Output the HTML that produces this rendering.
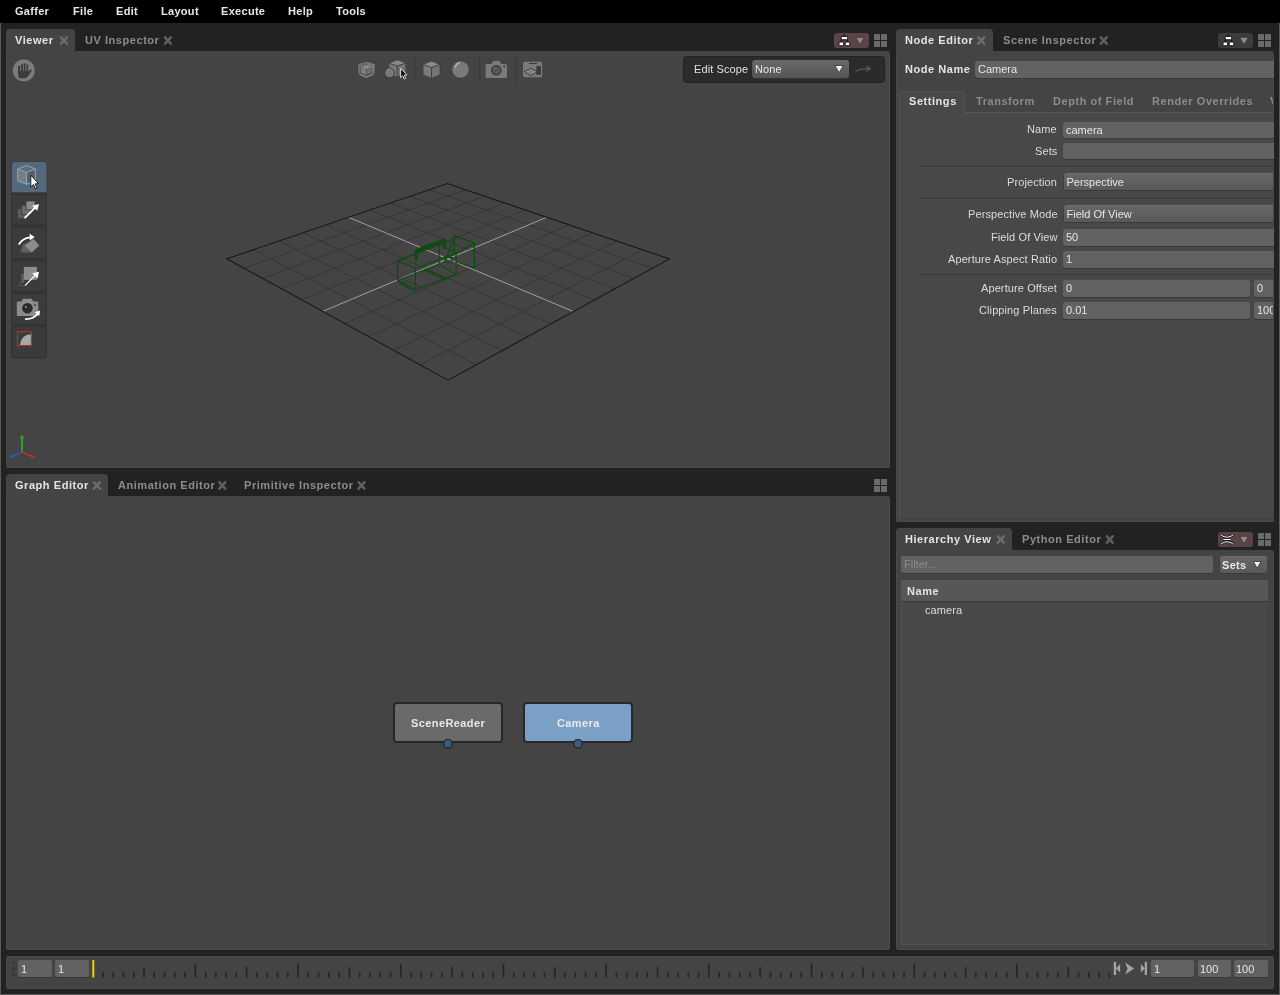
<!DOCTYPE html>
<html><head><meta charset="utf-8">
<style>
*{box-sizing:border-box;margin:0;padding:0}
html,body{width:1280px;height:995px;overflow:hidden;background:#222;font-family:"Liberation Sans",sans-serif;font-size:11px;color:#ddd}
.a{position:absolute}
.menu span,.tt,.lbl,.fld,.dd{will-change:transform}
.menu{left:0;top:0;width:1280px;height:23px;background:#000}
.menu span{position:absolute;top:5px;font-weight:bold;color:#e6e6e6;font-size:11px;letter-spacing:0.3px}
.tab{position:absolute;height:23px;background:#444;border-radius:4px 4px 0 0}
.tt{position:absolute;font-weight:bold;font-size:11px;letter-spacing:0.55px;white-space:nowrap}
.tt.on{color:#e4e4e4}
.tt.off{color:#8c8c8c}
.x{position:absolute;width:9px;height:9px}
.panel{position:absolute;background:#444;border-radius:0 3px 2px 2px;border:1px solid #4a4a4a;border-top:none}
.grid{position:absolute;width:13.6px;height:13.6px}
.grid i{position:absolute;width:6.3px;height:6.3px;background:#6a6a6a}
.lbl{position:absolute;color:#dcdcdc;white-space:nowrap;text-align:right;letter-spacing:0.1px}
.fld{position:absolute;background:#626262;border-radius:2px;box-shadow:0 1px 0 #383838;color:#e6e6e6;padding-left:3px;white-space:nowrap;overflow:hidden}
.dd{position:absolute;background:linear-gradient(#676767,#585858);border-radius:3px;color:#e6e6e6;padding-left:3px;white-space:nowrap;overflow:hidden;box-shadow:inset 1px 0 0 #3e3e3e,inset 0 -1px 0 #3a3a3a,inset 0 1px 0 #6c6c6c}
.sep{position:absolute;height:1px;background:#3a3a3a}
</style></head><body>
<!-- borders -->
<div class="a" style="left:0;top:23px;width:1px;height:972px;background:#5a5a5a"></div>
<div class="a" style="left:1279px;top:23px;width:1px;height:972px;background:#5a5a5a"></div>
<div class="a" style="left:0;top:994px;width:1280px;height:1px;background:#5a5a5a"></div>

<!-- menubar -->
<div class="a menu">
<span style="left:15px">Gaffer</span>
<span style="left:73px">File</span>
<span style="left:116px">Edit</span>
<span style="left:161px">Layout</span>
<span style="left:221px">Execute</span>
<span style="left:288px">Help</span>
<span style="left:336px">Tools</span>
</div>

<!-- ============ VIEWER ============ -->
<div class="tab" style="left:6px;top:29px;width:69px"></div>
<div class="tt on" style="left:15px;top:34px">Viewer</div>
<div class="tt off" style="left:85px;top:34px">UV Inspector</div>
<div class="panel" style="left:6px;top:51px;width:884px;height:417px"></div>
<svg class="a" style="left:0;top:0" width="890" height="470" viewBox="0 0 890 470">
<!-- hand -->
<circle cx="23.8" cy="70.4" r="11.4" fill="#7c7c7c" stroke="#3a3a3a" stroke-width="0.6"/>
<g stroke="#3c3c3c" stroke-linecap="round" fill="none"><path d="M19.1,66.5 L19.1,73" stroke-width="2"/><path d="M22,65 L22,72" stroke-width="1.9"/><path d="M24.7,64.1 L24.7,72" stroke-width="1.8"/><path d="M27.4,65 L27.4,72" stroke-width="1.7"/><path d="M28,74.5 L30.8,70.3" stroke-width="1.9"/></g>
<path d="M18.1,71 L28.6,71 L29.5,73.5 L27.3,77 Q26.2,78.2 24.5,78.2 L20.5,78.2 Q18.3,78.2 18.2,76 Z" fill="#3c3c3c"/>
<!-- top toolbar icons -->
<g fill="#7a7a7a">
 <!-- shield cube -->
 <path d="M366.3,60.7 L375.7,63.5 L375,74.3 L366.3,79 L357.9,74.75 L357.2,63.5 Z" fill="#3c3c3c"/>
 <path d="M366.3,61.5 L366.3,66 L360.5,68 L360.5,73.5 L358.3,74.3 L357.9,64 Z" fill="#6c6c6c"/>
 <path d="M366.6,61.5 L366.6,66 L372,68 L372,73.3 L374.6,74 L375,64 Z" fill="#767676"/>
 <path d="M358.7,74.8 L360.8,73.6 L366.3,76 L371.8,73.4 L374.2,74.6 L366.3,78.3 Z" fill="#7e7e7e"/>
 <path d="M366.3,65.3 L371.6,67.3 L366.3,69.5 L361,67.3 Z" fill="#8a8a8a"/>
 <path d="M361,67.6 L366,69.8 L366,75 L361,72.8 Z" fill="#808080"/>
 <path d="M371.6,67.6 L366.6,69.8 L366.6,75 L371.6,72.6 Z" fill="#707070"/>
 <!-- cube + sphere -->
 <path d="M397.2,60.2 L405.4,63.3 L397.2,65.9 L389.3,63.4 Z" fill="#8a8a8a"/>
 <path d="M389.3,63.7 L396.9,66.1 L396.9,76.6 L389.3,73.5 Z" fill="#7a7a7a"/>
 <path d="M405.4,63.6 L397.5,66.1 L397.5,76.6 L405.4,73.3 Z" fill="#747474"/>
 <path d="M389.3,63.4 L397.2,65.9 L405.4,63.3 M397.2,65.9 L397.2,76.6" stroke="#3e3e3e" stroke-width="0.8" fill="none"/>
 <circle cx="389.5" cy="72.9" r="4.8" fill="#7a7a7a" stroke="#3a3a3a" stroke-width="0.9"/>
 <path d="M386.6,71.2 Q387.4,69.2 389.5,68.9" stroke="#a0a0a0" stroke-width="0.7" fill="none"/>
 <!-- cube -->
 <path d="M431.5,61 L440,64.3 L431.5,67.6 L423,64.3 Z" fill="#8a8a8a"/>
 <path d="M423,64.3 L431.5,67.6 L431.5,78.4 L423,75 Z" fill="#7a7a7a"/>
 <path d="M440,64.3 L431.5,67.6 L431.5,78.4 L440,75 Z" fill="#747474"/>
 <path d="M431.5,61 L440,64.3 L440,75 L431.5,78.4 L423,75 L423,64.3 Z M423,64.3 L431.5,67.6 L440,64.3 M431.5,67.6 L431.5,78.4" fill="none" stroke="#3a3a3a" stroke-width="0.8"/>
 <!-- sphere -->
 <circle cx="460.5" cy="69.5" r="8.6" fill="#7a7a7a" stroke="#3c3c3c" stroke-width="0.6"/>
 <path d="M455.3,67 Q456.3,63.6 459.5,62.5" stroke="#c0c0c0" stroke-width="1.1" fill="none" stroke-linecap="round"/>
 <!-- camera -->
 <path d="M491.5,64 L493.2,61 L499.5,61 L501.2,64 L505.5,64 Q507,64 507,65.5 L507,76.6 Q507,78.1 505.5,78.1 L487.1,78.1 Q485.6,78.1 485.6,76.6 L485.6,65.5 Q485.6,64 487.1,64 Z" fill="#7a7a7a"/>
 <circle cx="496.3" cy="70.3" r="5.3" fill="#363636"/>
 <circle cx="496.3" cy="70.3" r="4.1" fill="#555"/>
 <circle cx="494.6" cy="68.6" r="0.7" fill="#9a9a9a"/>
 <rect x="503.4" y="65.5" width="1.8" height="1.8" fill="#3a3a3a"/>
 <!-- frame -->
 <rect x="523" y="61.8" width="19.2" height="15.4" rx="1.8" fill="#7a7a7a"/>
 <rect x="529" y="63" width="7.9" height="1" fill="#3a3a3a"/>
 <path d="M524.2,71.6 L531,68.4 L537.6,71.6 L531,75.5 Z" fill="#8c8c8c" stroke="#3a3a3a" stroke-width="0.9"/>
 <path d="M527.6,70 L534.3,73.5 M534.3,70 L527.6,73.5" stroke="#6a6a6a" stroke-width="0.5"/>
 <rect x="536.3" y="66.1" width="4.6" height="8.8" fill="#3c3c3c"/>
</g>
<g stroke="#393939" stroke-width="1"><line x1="414.8" y1="56" x2="414.8" y2="83"/><line x1="479.7" y1="56" x2="479.7" y2="83"/><line x1="515.6" y1="56" x2="515.6" y2="83"/></g>
<!-- cursor on top toolbar -->
<path d="M400.6,68.3 L400.6,77.6 L402.7,75.8 L404.3,79 L405.7,78.3 L404.2,75.1 L407,74.9 Z" fill="#111" stroke="#e8e8e8" stroke-width="0.9"/>
<!-- edit scope -->
<rect x="683.5" y="56.5" width="201" height="26" rx="3" fill="#2b2b2b" stroke="#222" stroke-width="1"/>
<rect x="752.2" y="59.9" width="96.8" height="18.4" rx="3" fill="url(#ddg)"/>
<defs><linearGradient id="ddg" x1="0" y1="0" x2="0" y2="1"><stop offset="0" stop-color="#6a6a6a"/><stop offset="1" stop-color="#555"/></linearGradient>
<linearGradient id="ddg2" x1="0" y1="0" x2="0" y2="1"><stop offset="0" stop-color="#666"/><stop offset="1" stop-color="#575757"/></linearGradient></defs>
<path d="M834.9,65.5 L843.3,65.5 L839.1,72.8 Z" fill="#f0f0f0" stroke="#2e2e2e" stroke-width="0.8"/>
<path d="M855.5,71.6 Q859.5,68.6 867,68.6" stroke="#555" stroke-width="1.3" fill="none"/><path d="M871.1,68.5 L866.1,64.8 L867.4,68.5 L865.5,72.6 Z" fill="#585858"/>
<!-- left toolbar -->
<rect x="11" y="161.5" width="35.5" height="197" rx="4" fill="#383838"/>
<path d="M11.9,192.3 L11.9,165 Q11.9,162 14.9,162 L43.4,162 Q46.4,162 46.4,165 L46.4,192.3 Z" fill="#56697c"/>
<rect x="11.9" y="194.3" width="34.5" height="31" fill="#3b3b3b" stroke="#313131" stroke-width="0.9"/>
<rect x="11.9" y="227.2" width="34.5" height="31.3" fill="#3b3b3b" stroke="#313131" stroke-width="0.9"/>
<rect x="11.9" y="260.2" width="34.5" height="31.3" fill="#3b3b3b" stroke="#313131" stroke-width="0.9"/>
<rect x="11.9" y="293.2" width="34.5" height="31.3" fill="#3b3b3b" stroke="#313131" stroke-width="0.9"/>
<rect x="11.9" y="326.3" width="34.5" height="31.5" rx="3" fill="#3b3b3b" stroke="#313131" stroke-width="0.9"/>
<!-- 1 select cube -->
<path d="M26.5,165.5 L35.3,169 L26.5,172.5 L17.7,169 Z" fill="#6a6a6a"/>
<path d="M17.7,169 L26.5,172.5 L26.5,184.3 L17.7,180.8 Z" fill="#7c7c7c"/>
<path d="M35.3,169 L26.5,172.5 L26.5,184.3 L35.3,180.8 Z" fill="#5e5e5e"/>
<path d="M26.5,165.5 L35.3,169 L35.3,180.8 L26.5,184.3 L17.7,180.8 L17.7,169 Z M17.7,169 L26.5,172.5 L35.3,169 M26.5,172.5 L26.5,184.3" fill="none" stroke="#7ab2e6" stroke-width="0.9"/>
<path d="M30.8,175.2 L30.8,187 L33.4,184.6 L35.4,188.6 L37,187.8 L35,183.9 L38.5,183.6 Z" fill="#fff" stroke="#111" stroke-width="0.9"/>
<!-- 2 translate -->
<rect x="17.9" y="209" width="9.2" height="9.2" fill="#5c5c5c"/>
<rect x="21.7" y="205.2" width="9.2" height="9.2" fill="#6e6e6e" stroke="#3b3b3b" stroke-width="0.8"/>
<rect x="26" y="201" width="9.1" height="8.8" fill="#8c8c8c" stroke="#3b3b3b" stroke-width="0.8"/>
<path d="M24.5,218.2 L36,206.8" stroke="#fff" stroke-width="1.9"/>
<path d="M39,204 L32.2,205.8 L37.2,210.8 Z" fill="#fff"/>
<!-- 3 rotate -->
<path d="M19.5,252.5 L28,252.5 L24,243 Z" fill="#555"/>
<path d="M22,252.5 L30,252.5 L28,242 L22,246 Z" fill="#606060"/>
<path d="M33.4,238.7 L39.3,245.4 L31.6,252.8 L24.9,245.4 Z" fill="#8c8c8c"/>
<path d="M18.8,244.5 Q23,237.5 31,237.3" stroke="#fff" stroke-width="1.8" fill="none"/>
<path d="M34.6,237 L29.6,233.8 L29.8,240.6 Z" fill="#fff"/>
<!-- 4 scale -->
<path d="M19,281.5 L19,286 L24,286 L24,285 L20,285 L20,281.5 Z" fill="#555"/>
<rect x="21.3" y="274" width="2.5" height="9" fill="#606060"/>
<rect x="23.8" y="266.9" width="13.1" height="13" fill="#8c8c8c"/>
<path d="M24.9,285.6 L35.5,275" stroke="#fff" stroke-width="1.2"/>
<path d="M39,271.8 L32.2,273.2 L37.6,278.6 Z" fill="#fff"/>
<!-- 5 camera -->
<path d="M21.5,301.5 L23,298.8 L31.7,298.8 L33.2,301.5 L37,301.5 Q38.3,301.5 38.3,302.8 L38.3,314.7 Q38.3,316 37,316 L18.1,316 Q16.8,316 16.8,314.7 L16.8,302.8 Q16.8,301.5 18.1,301.5 Z" fill="#8c8c8c"/>
<circle cx="27.4" cy="308.3" r="5.3" fill="#2b2b2b"/>
<circle cx="25.9" cy="306.9" r="0.9" fill="#aaa"/>
<circle cx="35" cy="305" r="0.9" fill="#3a3a3a"/>
<path d="M25,319 Q33,319.5 38,313.5" stroke="#fff" stroke-width="1.7" fill="none"/>
<path d="M40.2,310.6 L34.8,312.2 L39.2,316 Z" fill="#fff"/>
<!-- 6 crop -->
<rect x="17.5" y="331.7" width="14" height="14" fill="#3b3b3b" stroke="#d02828" stroke-width="1"/>
<path d="M30.9,344.9 L20.2,344.9 A10.7,10.7 0 0 1 30.9,334.2 Z" fill="#a8a8a8"/>
<!-- axis -->
<path d="M22,452 L22,435.2" stroke="#2e9e2e" stroke-width="2"/>
<path d="M22,452 L11,457" stroke="#2c5ac8" stroke-width="1.5"/>
<path d="M22,452 L33,457" stroke="#c82c2c" stroke-width="1.5"/>
<path d="M8,458 L12.5,454.5 L13,457.5 Z" fill="#2c5ac8"/>
<path d="M36,458 L31.5,454.5 L31,457.5 Z" fill="#c82c2c"/>
<rect x="20" y="437" width="4" height="2" rx="0.8" fill="#2e9e2e"/>
<g stroke="#363636" stroke-width="1"><line x1="253.4" y1="249.7" x2="476.1" y2="364.8"/><line x1="244.1" y1="268.3" x2="465.8" y2="189.8"/><line x1="278.8" y1="241.1" x2="502.5" y2="350.4"/><line x1="262.3" y1="278.3" x2="484.8" y2="196.3"/><line x1="303.1" y1="232.8" x2="527.4" y2="336.7"/><line x1="281.4" y1="288.8" x2="504.6" y2="203.0"/><line x1="326.3" y1="224.9" x2="551.0" y2="323.8"/><line x1="301.5" y1="299.8" x2="525.2" y2="210.0"/><line x1="370.0" y1="210.0" x2="594.5" y2="299.9"/><line x1="345.0" y1="323.6" x2="569.1" y2="224.9"/><line x1="390.6" y1="203.0" x2="614.7" y2="288.9"/><line x1="368.6" y1="336.6" x2="592.5" y2="232.8"/><line x1="410.3" y1="196.3" x2="633.8" y2="278.4"/><line x1="393.6" y1="350.3" x2="617.0" y2="241.1"/><line x1="429.2" y1="189.8" x2="652.0" y2="268.4"/><line x1="420.0" y1="364.8" x2="642.6" y2="249.8"/></g><g stroke="#a0a0a0" stroke-width="1"><line x1="348.6" y1="217.3" x2="573.4" y2="311.5"/><line x1="322.7" y1="311.4" x2="546.7" y2="217.3"/></g><polygon fill="none" stroke="#181818" stroke-width="1.1" points="226.8,258.8 447.5,183.6 669.4,258.9 448.1,380.2"/>
<!-- camera wireframe -->
<g stroke="#0a4d0c" stroke-width="1.15" fill="none">
 <path d="M397.6,260.6 L397.6,280.3 L415.3,289.4 L415.3,268.3 Z"/>
 <path d="M397.6,260.6 L439.2,244.8 L456.1,253.3 L415.3,268.3"/>
 <path d="M439.2,244.8 L439.2,264.5 L456.1,274.4 L456.1,253.3"/>
 <path d="M397.6,280.3 L439.2,264.5 M415.3,289.4 L456.1,274.4"/>
 <path d="M398.5,282.5 L414.5,291" />
 <path d="M454.3,235.6 L474.4,243 L474.4,268 L456.8,262 M474.4,243 L456.1,253.3 M454.3,235.6 L454.3,253.2 M454.3,235.6 L445.6,261"/>
 <path d="M424.5,269.4 L444.9,279.2" stroke-width="2"/>
 <path d="M415.4,251.3 L445.6,239.8" stroke-width="3.6"/>
 <path d="M416.2,250.4 L416.2,260.6" stroke-width="3"/>
 <path d="M444.6,239 L444.6,248.5" stroke-width="3"/>
 <path d="M445,257.5 L452,257.5 L452,262 L445,262 Z" />
</g>
</svg>
<!-- editor layout buttons viewer -->
<div class="a" style="left:834px;top:33px;width:35px;height:15px;background:#5c4347;border-radius:3px"></div>
<svg class="a" style="left:834px;top:33px" width="35" height="15"><path d="M10,1 L10,4 M7.2,6.8 L7.2,12.8 M13.5,6.8 L13.5,12.8" stroke="#111" stroke-width="0.9"/><g fill="#fff" stroke="#111" stroke-width="1"><rect x="7.2" y="3.4" width="6.5" height="3.4" rx="0.8"/><rect x="5" y="9" width="4.7" height="3.8" rx="0.8"/><rect x="11.2" y="9" width="4.6" height="3.8" rx="0.8"/></g><path d="M21.8,4.4 L30.3,4.4 L26,11.5 Z" fill="#8c8c8c" stroke="#333" stroke-width="0.6"/></svg>
<div class="grid" style="left:873.7px;top:33.6px"><i style="left:0;top:0"></i><i style="left:7.3px;top:0"></i><i style="left:0;top:7.3px"></i><i style="left:7.3px;top:7.3px"></i></div>
<div class="lbl" style="left:694px;top:63px;color:#e0e0e0">Edit Scope</div>
<div class="lbl" style="left:755px;top:63px;color:#e8e8e8">None</div>


<!-- ============ GRAPH EDITOR ============ -->
<div class="tab" style="left:6px;top:474px;width:102px"></div>
<div class="tt on" style="left:15px;top:479px">Graph Editor</div>
<div class="tt off" style="left:118px;top:479px">Animation Editor</div>
<div class="tt off" style="left:244px;top:479px">Primitive Inspector</div>
<div class="panel" style="left:6px;top:496px;width:884px;height:454px"></div>

<!-- ============ NODE EDITOR ============ -->
<div class="tab" style="left:896px;top:29px;width:97px"></div>
<div class="tt on" style="left:905px;top:34px">Node Editor</div>
<div class="tt off" style="left:1003px;top:34px">Scene Inspector</div>
<div class="panel" style="left:896px;top:51px;width:378px;height:471px"></div>

<!-- ============ HIERARCHY ============ -->
<div class="tab" style="left:896px;top:528px;width:116px"></div>
<div class="tt on" style="left:905px;top:533px">Hierarchy View</div>
<div class="tt off" style="left:1022px;top:533px">Python Editor</div>
<div class="panel" style="left:896px;top:550px;width:378px;height:400px"></div>

<!-- ============ TIMELINE ============ -->
<div class="panel" style="left:6px;top:956px;width:1268px;height:33px;border-radius:2px;border-top:1px solid #4a4a4a"></div>

<!-- close icons -->
<svg class="a" style="left:0;top:0;pointer-events:none" width="1280" height="995">
<defs><g id="xx"><path d="M1.1,1.2 L6.9,7.6 M6.9,1.2 L1.1,7.6" stroke-width="2.5" stroke-linecap="round"/></g></defs>
<g stroke="#6c6c6c"><use href="#xx" x="59.95" y="36.10"/><use href="#xx" x="92.95" y="481.10"/><use href="#xx" x="977.25" y="36.10"/><use href="#xx" x="996.75" y="535.10"/></g>
<g stroke="#606060"><use href="#xx" x="163.95" y="36.10"/><use href="#xx" x="218.25" y="481.10"/><use href="#xx" x="357.45" y="481.10"/><use href="#xx" x="1099.75" y="36.10"/><use href="#xx" x="1105.75" y="535.10"/></g>
</svg>
<!-- node editor layout buttons -->
<div class="a" style="left:1218px;top:33px;width:35px;height:15px;background:#3c3c3c;border-radius:3px"></div>
<svg class="a" style="left:1218px;top:33px" width="35" height="15"><path d="M10,1 L10,4 M7.2,6.8 L7.2,12.8 M13.5,6.8 L13.5,12.8" stroke="#111" stroke-width="0.9"/><g fill="#fff" stroke="#111" stroke-width="1"><rect x="7.2" y="3.4" width="6.5" height="3.4" rx="0.8"/><rect x="5" y="9" width="4.7" height="3.8" rx="0.8"/><rect x="11.2" y="9" width="4.6" height="3.8" rx="0.8"/></g><path d="M21.8,4.4 L30.3,4.4 L26,11.5 Z" fill="#8c8c8c" stroke="#333" stroke-width="0.6"/></svg>
<div class="grid" style="left:1257.7px;top:33.7px"><i style="left:0;top:0"></i><i style="left:7.3px;top:0"></i><i style="left:0;top:7.3px"></i><i style="left:7.3px;top:7.3px"></i></div>
<div class="grid" style="left:873.8px;top:478.5px"><i style="left:0;top:0"></i><i style="left:7.3px;top:0"></i><i style="left:0;top:7.3px"></i><i style="left:7.3px;top:7.3px"></i></div>
<!-- hierarchy layout buttons -->
<div class="a" style="left:1218px;top:532px;width:35px;height:15px;background:#5a4246;border-radius:3px"></div>
<svg class="a" style="left:1218px;top:532px" width="35" height="15"><path d="M3,3 Q9,7.5 15,3 M3,12 Q9,7.5 15,12 M5.5,7.5 L12.5,7.5" stroke="#111" stroke-width="2.2" fill="none"/><path d="M3,3 Q9,7.5 15,3 M3,12 Q9,7.5 15,12 M5.5,7.5 L12.5,7.5" stroke="#fff" stroke-width="1" fill="none"/><path d="M21.8,4.4 L30.3,4.4 L26,11.5 Z" fill="#8c8c8c" stroke="#333" stroke-width="0.6"/></svg>
<div class="grid" style="left:1257.5px;top:532.5px"><i style="left:0;top:0"></i><i style="left:7.3px;top:0"></i><i style="left:0;top:7.3px"></i><i style="left:7.3px;top:7.3px"></i></div>

<!-- NODE EDITOR CONTENT -->
<div class="tt on" style="left:905px;top:63px">Node Name</div>
<div class="fld" style="left:974.6px;top:61px;width:298.5px;height:17px;line-height:17px;border-radius:3px 0 0 3px">Camera</div>
<div class="a" style="left:899px;top:112px;width:375px;height:406.5px;background:#484848;border:1px solid #525252;border-bottom-color:#404040;border-right:none;border-radius:0 0 1px 1px"></div>
<div class="a" style="left:899px;top:90.5px;width:65.5px;height:23px;background:#484848;border:1px solid #525252;border-bottom:none;border-radius:4px 4px 0 0"></div>
<div class="a" style="left:964.5px;top:112px;width:308.5px;height:1px;background:#555"></div>
<div class="tt on" style="left:908.5px;top:95px">Settings</div>
<div class="tt off" style="left:975.5px;top:95px">Transform</div>
<div class="tt off" style="left:1053px;top:95px">Depth of Field</div>
<div class="tt off" style="left:1152px;top:95px">Render Overrides</div>
<div class="tt off" style="left:1270px;top:95px;width:3px;overflow:hidden">V</div>

<div class="lbl" style="right:222.8px;top:123px">Name</div>
<div class="fld" style="left:1062.5px;top:121.7px;width:210.6px;height:16.2px;line-height:16px;border-radius:3px 0 0 3px">camera</div>
<div class="lbl" style="right:222.8px;top:145px">Sets</div>
<div class="fld" style="left:1062.5px;top:143.4px;width:210.6px;height:16.4px;border-radius:3px 0 0 3px"></div>
<div class="sep" style="left:918px;top:166px;width:356px"></div>
<div class="lbl" style="right:222.8px;top:176px">Projection</div>
<div class="dd" style="left:1063px;top:173.2px;width:210px;height:18px;line-height:18px;padding-left:3.5px;border-radius:3px 0 0 3px">Perspective</div>
<div class="sep" style="left:918px;top:198px;width:356px"></div>
<div class="lbl" style="right:222.8px;top:208px">Perspective Mode</div>
<div class="dd" style="left:1063px;top:205.2px;width:210px;height:17.8px;line-height:18px;padding-left:3.5px;border-radius:3px 0 0 3px">Field Of View</div>
<div class="lbl" style="right:222.8px;top:231px">Field Of View</div>
<div class="fld" style="left:1062.5px;top:229.3px;width:210.6px;height:16.7px;line-height:17px;border-radius:3px 0 0 3px">50</div>
<div class="lbl" style="right:222.8px;top:253px">Aperture Aspect Ratio</div>
<div class="fld" style="left:1062.5px;top:251.2px;width:210.6px;height:17.1px;line-height:17px;border-radius:3px 0 0 3px">1</div>
<div class="sep" style="left:918px;top:274px;width:356px"></div>
<div class="lbl" style="right:222.8px;top:282px">Aperture Offset</div>
<div class="fld" style="left:1062.5px;top:280.3px;width:186.5px;height:16.8px;line-height:17px">0</div>
<div class="fld" style="left:1254.4px;top:280.3px;width:18.7px;height:16.8px;line-height:17px;border-radius:3px 0 0 3px">0</div>
<div class="lbl" style="right:222.8px;top:304px">Clipping Planes</div>
<div class="fld" style="left:1062.5px;top:302.4px;width:186.5px;height:16.8px;line-height:17px">0.01</div>
<div class="fld" style="left:1254.4px;top:302.4px;width:18.7px;height:16.8px;line-height:17px;border-radius:3px 0 0 3px">100</div>

<!-- HIERARCHY CONTENT -->
<div class="fld" style="left:901.2px;top:556.2px;width:311.8px;height:17.2px;line-height:17px;color:#8a8a8a">Filter...</div>
<div class="dd" style="left:1219px;top:556px;width:48px;height:18px;line-height:18px;font-weight:bold;padding-left:3px;letter-spacing:0.3px">Sets</div>
<svg class="a" style="left:1252px;top:560px" width="12" height="11"><path d="M1.4,1.5 L9,1.5 L5.2,8.3 Z" fill="#f0f0f0" stroke="#2e2e2e" stroke-width="0.8"/></svg>
<div class="a" style="left:901.2px;top:580px;width:367px;height:365px;background:#484848;border:1px solid #525252;border-top-color:#3e3e3e;border-right-color:#454545"></div>
<div class="a" style="left:901.2px;top:580px;width:367px;height:21.6px;background:#575757;border-bottom:1px solid #3a3a3a"></div>
<div class="tt on" style="left:906.5px;top:585px">Name</div>
<div class="lbl" style="left:925px;top:604px">camera</div>

<!-- GRAPH EDITOR NODES -->
<div class="a" style="left:393.2px;top:702.2px;width:109.7px;height:41px;background:#6a6a6a;border:2px solid #282828;border-radius:4px"></div>
<div class="tt" style="left:410.5px;top:716.5px;color:#e8e8e8;letter-spacing:0.4px">SceneReader</div>
<div class="a" style="left:523.4px;top:702.2px;width:109.2px;height:41px;background:#7aa0c6;border:2px solid #282828;border-radius:4px"></div>
<div class="tt" style="left:556.8px;top:716.5px;color:#eaeaea;letter-spacing:0.4px">Camera</div>
<svg class="a" style="left:0;top:0" width="1280" height="995"><circle cx="447.9" cy="743.8" r="4.3" fill="#3c5a82" stroke="#222" stroke-width="1.2"/><circle cx="577.9" cy="743.8" r="4.3" fill="#3c5a82" stroke="#222" stroke-width="1.2"/></svg>

<!-- TIMELINE -->
<svg class="a" style="left:0;top:956px" width="1280" height="33">
<g fill="#3b3b3b"><circle cx="13.6" cy="6.7" r="2"/><circle cx="13.6" cy="12.5" r="2"/><circle cx="13.6" cy="18.5" r="2"/></g>
<g fill="#252525"><rect x="102.07" y="16.5" width="1.7" height="5.0"/><rect x="112.34" y="16.5" width="1.7" height="5.0"/><rect x="122.61" y="16.5" width="1.7" height="5.0"/><rect x="132.88" y="16.5" width="1.7" height="5.0"/><rect x="143.15" y="11" width="1.7" height="10.5"/><rect x="153.42" y="16.5" width="1.7" height="5.0"/><rect x="163.69" y="16.5" width="1.7" height="5.0"/><rect x="173.96" y="16.5" width="1.7" height="5.0"/><rect x="184.23" y="16.5" width="1.7" height="5.0"/><rect x="194.50" y="7.75" width="1.7" height="13.75"/><rect x="204.77" y="16.5" width="1.7" height="5.0"/><rect x="215.04" y="16.5" width="1.7" height="5.0"/><rect x="225.31" y="16.5" width="1.7" height="5.0"/><rect x="235.58" y="16.5" width="1.7" height="5.0"/><rect x="245.85" y="11" width="1.7" height="10.5"/><rect x="256.12" y="16.5" width="1.7" height="5.0"/><rect x="266.39" y="16.5" width="1.7" height="5.0"/><rect x="276.66" y="16.5" width="1.7" height="5.0"/><rect x="286.93" y="16.5" width="1.7" height="5.0"/><rect x="297.20" y="7.75" width="1.7" height="13.75"/><rect x="307.47" y="16.5" width="1.7" height="5.0"/><rect x="317.74" y="16.5" width="1.7" height="5.0"/><rect x="328.01" y="16.5" width="1.7" height="5.0"/><rect x="338.28" y="16.5" width="1.7" height="5.0"/><rect x="348.55" y="11" width="1.7" height="10.5"/><rect x="358.82" y="16.5" width="1.7" height="5.0"/><rect x="369.09" y="16.5" width="1.7" height="5.0"/><rect x="379.36" y="16.5" width="1.7" height="5.0"/><rect x="389.63" y="16.5" width="1.7" height="5.0"/><rect x="399.90" y="7.75" width="1.7" height="13.75"/><rect x="410.17" y="16.5" width="1.7" height="5.0"/><rect x="420.44" y="16.5" width="1.7" height="5.0"/><rect x="430.71" y="16.5" width="1.7" height="5.0"/><rect x="440.98" y="16.5" width="1.7" height="5.0"/><rect x="451.25" y="11" width="1.7" height="10.5"/><rect x="461.52" y="16.5" width="1.7" height="5.0"/><rect x="471.79" y="16.5" width="1.7" height="5.0"/><rect x="482.06" y="16.5" width="1.7" height="5.0"/><rect x="492.33" y="16.5" width="1.7" height="5.0"/><rect x="502.60" y="7.75" width="1.7" height="13.75"/><rect x="512.87" y="16.5" width="1.7" height="5.0"/><rect x="523.14" y="16.5" width="1.7" height="5.0"/><rect x="533.41" y="16.5" width="1.7" height="5.0"/><rect x="543.68" y="16.5" width="1.7" height="5.0"/><rect x="553.95" y="11" width="1.7" height="10.5"/><rect x="564.22" y="16.5" width="1.7" height="5.0"/><rect x="574.49" y="16.5" width="1.7" height="5.0"/><rect x="584.76" y="16.5" width="1.7" height="5.0"/><rect x="595.03" y="16.5" width="1.7" height="5.0"/><rect x="605.30" y="7.75" width="1.7" height="13.75"/><rect x="615.57" y="16.5" width="1.7" height="5.0"/><rect x="625.84" y="16.5" width="1.7" height="5.0"/><rect x="636.11" y="16.5" width="1.7" height="5.0"/><rect x="646.38" y="16.5" width="1.7" height="5.0"/><rect x="656.65" y="11" width="1.7" height="10.5"/><rect x="666.92" y="16.5" width="1.7" height="5.0"/><rect x="677.19" y="16.5" width="1.7" height="5.0"/><rect x="687.46" y="16.5" width="1.7" height="5.0"/><rect x="697.73" y="16.5" width="1.7" height="5.0"/><rect x="708.00" y="7.75" width="1.7" height="13.75"/><rect x="718.27" y="16.5" width="1.7" height="5.0"/><rect x="728.54" y="16.5" width="1.7" height="5.0"/><rect x="738.81" y="16.5" width="1.7" height="5.0"/><rect x="749.08" y="16.5" width="1.7" height="5.0"/><rect x="759.35" y="11" width="1.7" height="10.5"/><rect x="769.62" y="16.5" width="1.7" height="5.0"/><rect x="779.89" y="16.5" width="1.7" height="5.0"/><rect x="790.16" y="16.5" width="1.7" height="5.0"/><rect x="800.43" y="16.5" width="1.7" height="5.0"/><rect x="810.70" y="7.75" width="1.7" height="13.75"/><rect x="820.97" y="16.5" width="1.7" height="5.0"/><rect x="831.24" y="16.5" width="1.7" height="5.0"/><rect x="841.51" y="16.5" width="1.7" height="5.0"/><rect x="851.78" y="16.5" width="1.7" height="5.0"/><rect x="862.05" y="11" width="1.7" height="10.5"/><rect x="872.32" y="16.5" width="1.7" height="5.0"/><rect x="882.59" y="16.5" width="1.7" height="5.0"/><rect x="892.86" y="16.5" width="1.7" height="5.0"/><rect x="903.13" y="16.5" width="1.7" height="5.0"/><rect x="913.40" y="7.75" width="1.7" height="13.75"/><rect x="923.67" y="16.5" width="1.7" height="5.0"/><rect x="933.94" y="16.5" width="1.7" height="5.0"/><rect x="944.21" y="16.5" width="1.7" height="5.0"/><rect x="954.48" y="16.5" width="1.7" height="5.0"/><rect x="964.75" y="11" width="1.7" height="10.5"/><rect x="975.02" y="16.5" width="1.7" height="5.0"/><rect x="985.29" y="16.5" width="1.7" height="5.0"/><rect x="995.56" y="16.5" width="1.7" height="5.0"/><rect x="1005.83" y="16.5" width="1.7" height="5.0"/><rect x="1016.10" y="7.75" width="1.7" height="13.75"/><rect x="1026.37" y="16.5" width="1.7" height="5.0"/><rect x="1036.64" y="16.5" width="1.7" height="5.0"/><rect x="1046.91" y="16.5" width="1.7" height="5.0"/><rect x="1057.18" y="16.5" width="1.7" height="5.0"/><rect x="1067.45" y="11" width="1.7" height="10.5"/><rect x="1077.72" y="16.5" width="1.7" height="5.0"/><rect x="1087.99" y="16.5" width="1.7" height="5.0"/><rect x="1098.26" y="16.5" width="1.7" height="5.0"/><rect x="1108.53" y="16.5" width="1.7" height="5.0"/></g>
<rect x="92.3" y="4" width="2" height="17.5" fill="#f0d000"/>
<g fill="#a4a4a4"><rect x="1113.8" y="5.9" width="2.3" height="13.1"/><path d="M1116,12.5 L1120.1,8.1 L1120.1,16.5 Z"/><path d="M1125.2,6.6 L1134.1,12.5 L1125.2,18.5 L1127.5,12.5 Z"/><rect x="1144.7" y="5.9" width="2.3" height="13.1"/><path d="M1144.8,12.5 L1140.9,7.9 L1140.9,16.5 Z"/></g>
</svg>
<div class="fld" style="left:18.4px;top:960px;width:33.8px;height:17px;line-height:18px;padding-left:3px">1</div>
<div class="fld" style="left:55px;top:960px;width:33.7px;height:17px;line-height:18px;padding-left:3px">1</div>
<div class="fld" style="left:1151.3px;top:960px;width:42.5px;height:17px;line-height:18px;padding-left:3px">1</div>
<div class="fld" style="left:1197.5px;top:960px;width:33.3px;height:17px;line-height:18px;padding-left:2px">100</div>
<div class="fld" style="left:1234.3px;top:960px;width:33.6px;height:17px;line-height:18px;padding-left:2px">100</div>

</body></html>
